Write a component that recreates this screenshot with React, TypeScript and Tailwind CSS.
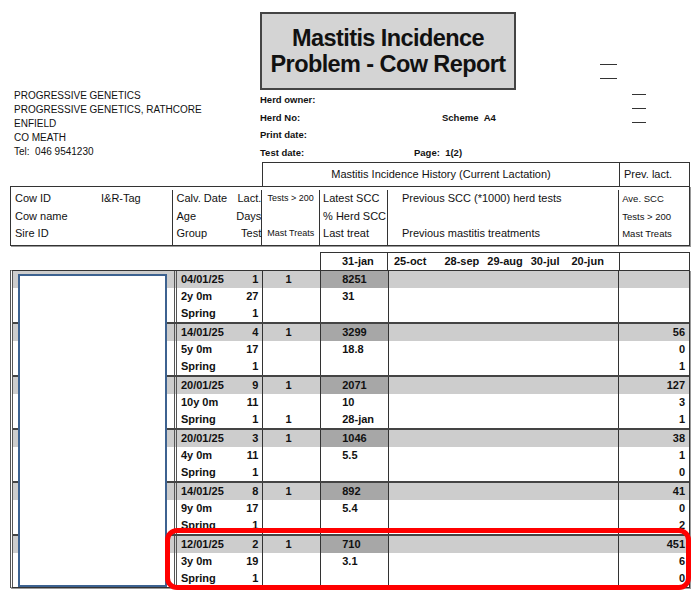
import React from "react";

const groups = [
  { d: "04/01/25", l: "1", age: "2y 0m", days: "27", t: "1", scc: "8251", pct: "31", lt: "", mt: "", p: ["", "", ""] },
  { d: "14/01/25", l: "4", age: "5y 0m", days: "17", t: "1", scc: "3299", pct: "18.8", lt: "", mt: "", p: ["56", "0", "1"] },
  { d: "20/01/25", l: "9", age: "10y 0m", days: "11", t: "1", scc: "2071", pct: "10", lt: "28-jan", mt: "1", p: ["127", "3", "1"] },
  { d: "20/01/25", l: "3", age: "4y 0m", days: "11", t: "1", scc: "1046", pct: "5.5", lt: "", mt: "", p: ["38", "1", "0"] },
  { d: "14/01/25", l: "8", age: "9y 0m", days: "17", t: "1", scc: "892", pct: "5.4", lt: "", mt: "", p: ["41", "0", "2"] },
  { d: "12/01/25", l: "2", age: "3y 0m", days: "19", t: "1", scc: "710", pct: "3.1", lt: "", mt: "", p: ["451", "6", "0"] },
];

function Row({ g, i }: { g: any; i: number }) {
  const first = i === 0;
  const cells = [
    [g.d, g.l],
    [g.age, g.days],
    ["Spring", "1"],
  ][i];
  const t = [g.t, "", g.mt][i];
  const s = [g.scc, g.pct, g.lt][i];
  return (
    <div className={`flex h-[17px] items-center ${first ? "bg-[#cdcdcd]" : ""}`}>
      <div className="w-[162px]" />
      <div className="w-[90px] h-full flex items-center justify-between pl-1 pr-1 border-l-[3px] border-double border-[#555] border-r border-r-[#333]">
        <span>{cells[0]}</span><span>{cells[1]}</span>
      </div>
      <div className="w-[58px] h-full flex items-center pl-[22px] border-r border-[#333]">{t}</div>
      <div className={`w-[68px] h-full flex items-center pl-[21px] border-r border-[#333] ${first ? "bg-[#a7a7a7]" : ""}`}>{s}</div>
      <div className="w-[232px] h-full border-r border-[#333]" />
      <div className="w-[70px] h-full flex items-center justify-end pr-1">{g.p[i]}</div>
    </div>
  );
}

export default function App() {
  return (
    <div className="relative w-[700px] h-[593px] bg-white overflow-hidden text-[#111]" style={{ fontFamily: '"Liberation Sans", Arial, sans-serif' }}>
      <div className="flex">
        <div className="w-[260px] pt-[89px] pl-[14px] text-[10px] leading-[14px]">
          <div>PROGRESSIVE GENETICS</div>
          <div>PROGRESSIVE GENETICS, RATHCORE</div>
          <div>ENFIELD</div>
          <div>CO MEATH</div>
          <div>Tel:&nbsp;&nbsp;046 9541230</div>
        </div>
        <div className="w-[340px] pt-[12px]">
          <div className="w-[256px] h-[78px] bg-[#d4d4d4] border-2 border-[#444] flex flex-col items-center justify-center text-[23.5px] leading-[26px] font-bold tracking-tight">
            <div>Mastitis Incidence</div>
            <div>Problem - Cow Report</div>
          </div>
          <div className="text-[9.5px] font-bold leading-[17.5px] mt-[1px]">
            <div>Herd owner:</div>
            <div className="flex"><span className="w-[182px]">Herd No:</span><span>Scheme&nbsp;&nbsp;A4</span></div>
            <div>Print date:</div>
            <div className="flex"><span className="w-[154px]">Test date:</span><span>Page:&nbsp;&nbsp;1(2)</span></div>
          </div>
        </div>
        <div className="flex-1 relative">
          <div className="absolute left-[0px] top-[64px] w-[17px] h-[1px] bg-[#333]" />
          <div className="absolute left-[0px] top-[78px] w-[17px] h-[1px] bg-[#333]" />
          <div className="absolute left-[32px] top-[94px] w-[14px] h-[1px] bg-[#333]" />
          <div className="absolute left-[32px] top-[108px] w-[14px] h-[1px] bg-[#333]" />
          <div className="absolute left-[32px] top-[122px] w-[14px] h-[1px] bg-[#333]" />
        </div>
      </div>

      <div className="ml-[10px] mt-[1px] w-[680px] text-[11px]">
        <div className="flex h-[24px]">
          <div className="w-[252px]" />
          <div className="w-[358px] border border-[#333] border-b-0 flex items-center justify-center">Mastitis Incidence History (Current Lactation)</div>
          <div className="w-[70px] border border-[#333] border-l-0 border-b-0 flex items-center pl-1">Prev. lact.</div>
        </div>
        <div className="flex h-[60px] border border-[#333] leading-[17.5px] pt-[3px] shadow-[1px_1px_0_#999]">
          <div className="w-[162px] pl-1 border-r border-[#333]">
            <div className="flex"><span className="w-[86px]">Cow ID</span><span>I&amp;R-Tag</span></div>
            <div>Cow name</div><div>Sire ID</div>
          </div>
          <div className="w-[90px] pl-1 border-r border-[#333]">
            <div className="flex justify-between"><span>Calv. Date</span><span>Lact.</span></div>
            <div className="flex justify-between"><span>Age</span><span>Days</span></div>
            <div className="flex justify-between"><span>Group</span><span>Test</span></div>
          </div>
          <div className="w-[58px] text-[9px] text-center border-r border-[#333]">
            <div>Tests &gt; 200</div><div>&nbsp;</div><div>Mast Treats</div>
          </div>
          <div className="w-[68px] pl-[3px] border-r border-[#333]">
            <div>Latest SCC</div><div>% Herd SCC</div><div>Last treat</div>
          </div>
          <div className="w-[232px] pl-[14px] border-r border-[#333]">
            <div>Previous SCC (*1000) herd tests</div><div>&nbsp;</div><div>Previous mastitis treatments</div>
          </div>
          <div className="w-[70px] pl-[3px] text-[9.5px]">
            <div>Ave. SCC</div><div>Tests &gt; 200</div><div>Mast Treats</div>
          </div>
        </div>

        <div className="flex h-[18px] mt-[6px] font-bold">
          <div className="w-[310px]" />
          <div className="w-[68px] border border-[#333] border-b-0 flex items-center pl-[21px]">31-jan</div>
          <div className="w-[232px] border-t border-r border-[#333] flex items-center pl-[6px] gap-[18px]">
            <span>25-oct</span><span className="flex gap-[8px]"><span>28-sep</span><span>29-aug</span><span>30-jul</span><span className="ml-[4px]">20-jun</span></span>
          </div>
          <div className="w-[70px] border-t border-r border-[#333]" />
        </div>

        <div className="relative border border-[#333] border-l-[3px] border-l-[#555] border-double font-bold shadow-[1px_1px_0_#999]">
          {groups.map((g, gi) => (
            <div key={gi} className={gi > 0 ? "border-t-2 border-[#444]" : ""}>
              {[0, 1, 2].map((i) => <Row key={i} g={g} i={i} />)}
            </div>
          ))}
          <div className="absolute left-[5px] top-[3px] w-[149px] bottom-[0px] bg-white border-2 border-[#3d6290]" />
        </div>
      </div>

      <div className="absolute left-[165px] top-[528px] w-[526px] h-[62px] border-[5px] border-[#f00] rounded-[12px]" />
    </div>
  );
}
